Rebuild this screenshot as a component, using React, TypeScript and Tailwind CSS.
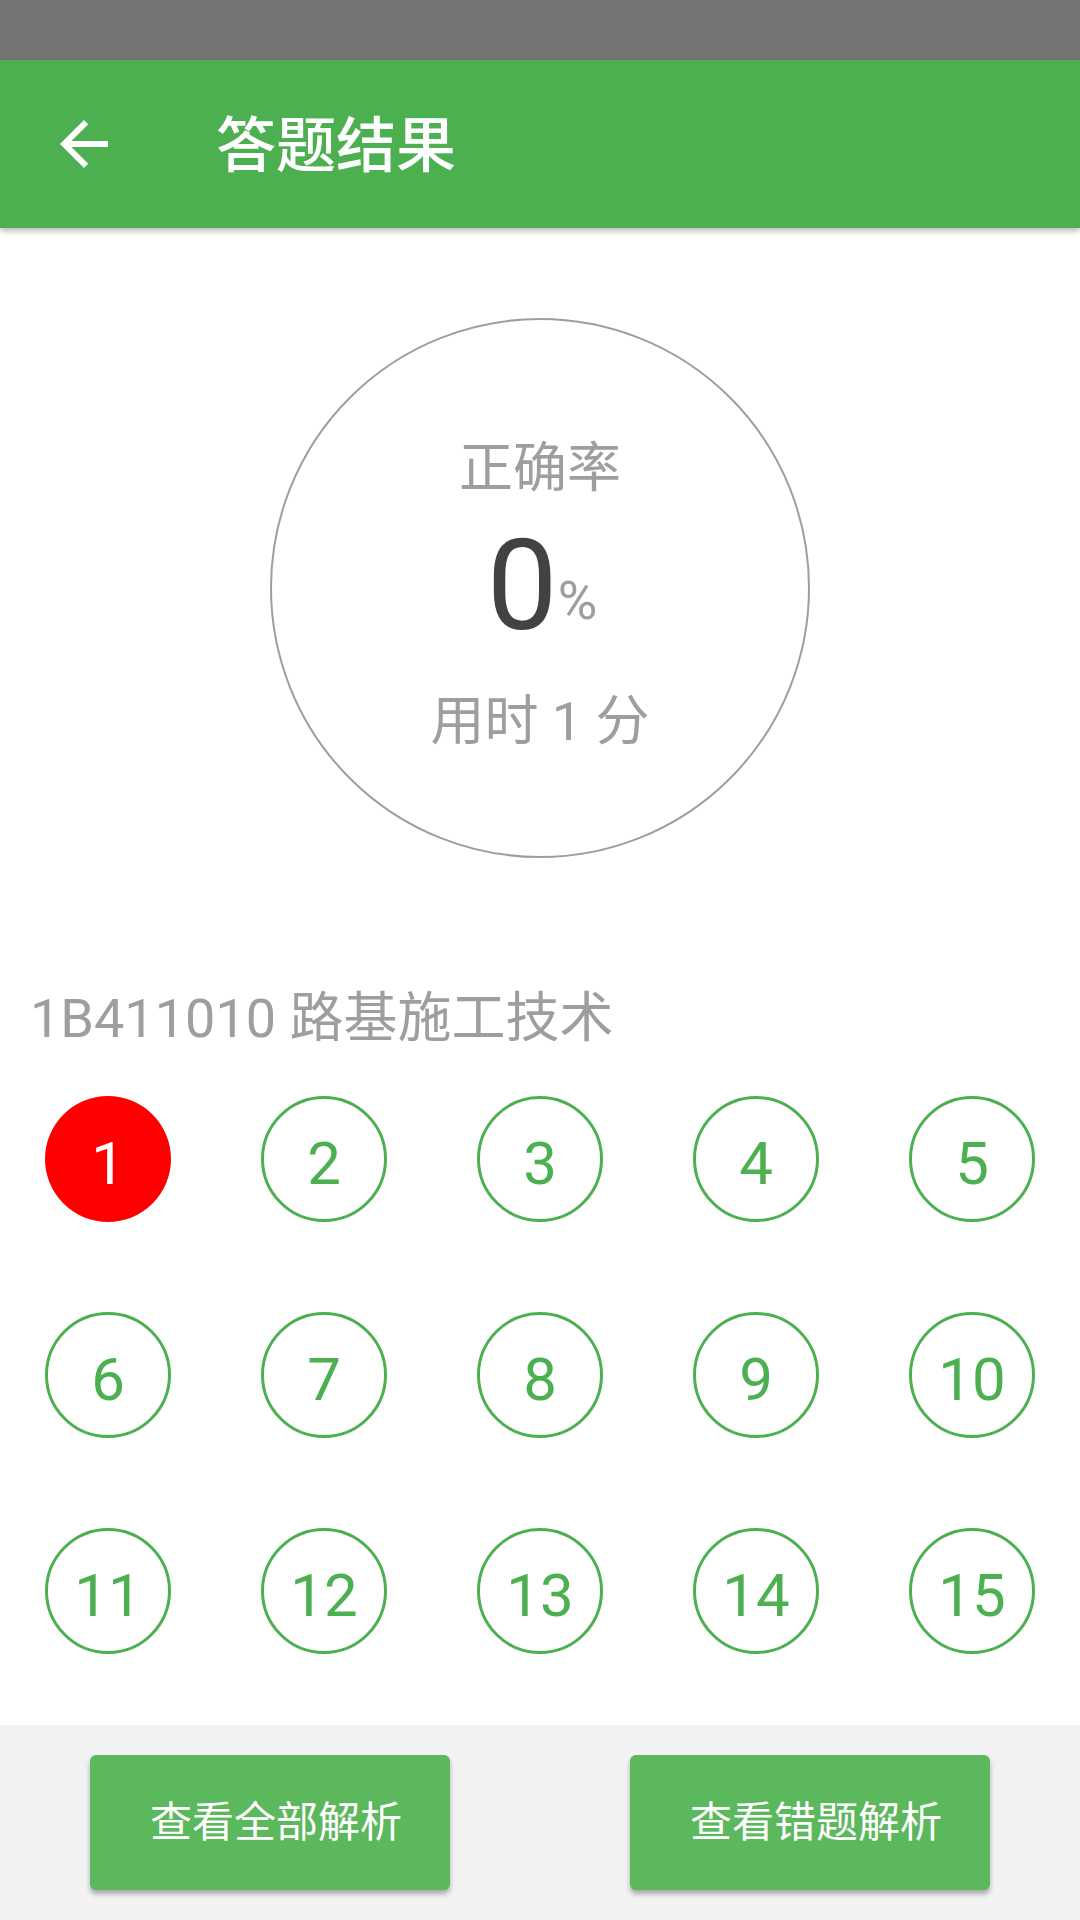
import React from "react";

const items = Array.from({ length: 15 }, (_, i) => i + 1);

function BackArrow() {
  return (
    <svg width="72" height="72" viewBox="0 0 24 24" fill="#ffffff">
      <path d="M20 11H7.83l5.59-5.59L12 4l-8 8 8 8 1.41-1.41L7.83 13H20v-2z" />
    </svg>
  );
}

export default function App() {
  return (
    <div className="w-[1080px] h-[1920px] flex flex-col bg-white overflow-hidden font-['Roboto','Noto_Sans_CJK_SC',sans-serif]">
      <div className="h-[60px] bg-[#757575] shrink-0" />
      <div className="relative z-10 h-[168px] shrink-0 bg-[#4caf50] flex items-center shadow-[0_3px_6px_rgba(0,0,0,0.28)]">
        <div className="w-[72px] h-[72px] ml-[48px] flex items-center justify-center">
          <BackArrow />
        </div>
        <div className="ml-[96px] pt-[6px] text-[60px] leading-[60px] font-medium text-white">答题结果</div>
      </div>

      <div className="mt-[90px] mx-auto w-[540px] h-[540px] shrink-0 rounded-full border-2 border-[#9e9e9e] flex flex-col items-center pt-[122px]">
        <div className="text-[54px] leading-[54px] text-[#9e9e9e]">正确率</div>
        <div className="mt-[27px] flex items-baseline pl-[4px]">
          <span className="text-[126px] leading-[126px] text-[#424242]">0</span>
          <span className="text-[54px] leading-[54px] text-[#9e9e9e] -translate-y-[10px]">%</span>
        </div>
        <div className="mt-[46px] text-[54px] leading-[54px] text-[#9e9e9e] whitespace-pre">用时 1 分</div>
      </div>

      <div className="mt-[134px] pl-[30px] text-[54px] leading-[54px] text-[#9e9e9e]">1B411010 路基施工技术</div>

      <div className="mt-[5px] grid grid-cols-5">
        {items.map((n) => (
          <div key={n} className="h-[216px] flex items-center justify-center">
            {n === 1 ? (
              <div className="w-[126px] h-[126px] rounded-full bg-[#ff0000] flex items-center justify-center pt-[10px] text-[60px] text-white">
                {n}
              </div>
            ) : (
              <div className="w-[126px] h-[126px] rounded-full border-[3px] border-[#4caf50] flex items-center justify-center pt-[10px] text-[60px] text-[#4caf50]">
                {n}
              </div>
            )}
          </div>
        ))}
      </div>

      <div className="mt-auto h-[195px] shrink-0 bg-[#f2f2f2] grid grid-cols-2 items-center">
        <div className="flex justify-center">
          <button className="w-[360px] h-[135px] rounded-[6px] bg-[#5cb85c] text-white text-[42px] pl-[12px] shadow-[0_4px_5px_rgba(0,0,0,0.3)]">
            查看全部解析
          </button>
        </div>
        <div className="flex justify-center">
          <button className="w-[360px] h-[135px] rounded-[6px] bg-[#5cb85c] text-white text-[42px] pl-[12px] shadow-[0_4px_5px_rgba(0,0,0,0.3)]">
            查看错题解析
          </button>
        </div>
      </div>
    </div>
  );
}
